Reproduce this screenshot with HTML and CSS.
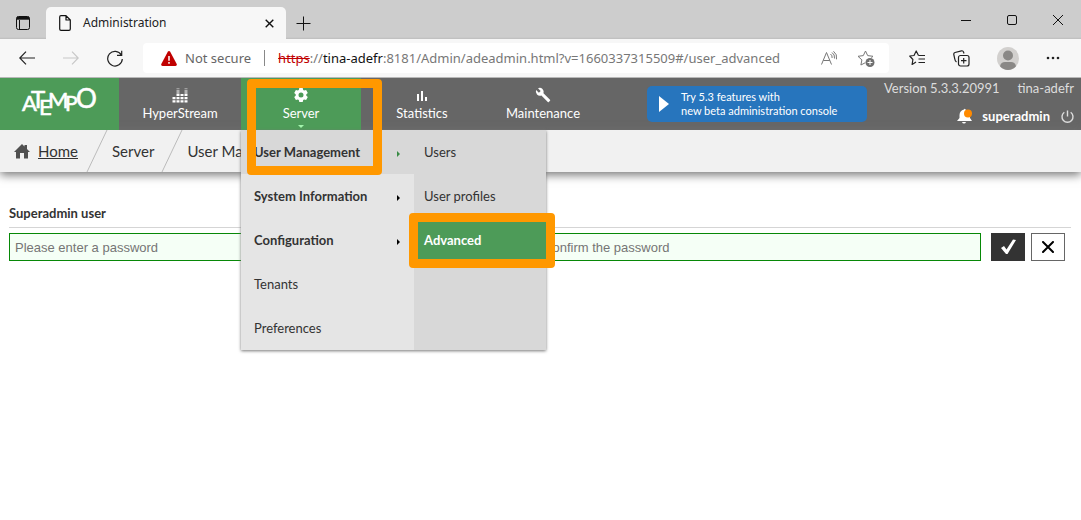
FILE: index.html
```html
<!DOCTYPE html>
<html lang="en">
<head>
<meta charset="utf-8">
<title>Administration</title>
<link rel="stylesheet" href="styles.css">
</head>
<body>
<div class="browser">
  <div class="tab-strip">
    <button class="icon-button workspace" aria-label="Tab actions">
      <svg width="16" height="16" viewBox="0 0 16 16" fill="none" stroke="#111"><rect x="1.5" y="1.5" width="13" height="13" rx="2"/><path d="M1.500 3.500h13M4.500 5v9.500" /><path d="M2 3.200h12" stroke-width="3"/></svg>
    </button>
    <div class="tab">
      <svg width="14" height="16" viewBox="0 0 14 16" fill="none" stroke="#111" stroke-width="1.200"><path d="M3 .7h5l4.300 4.300v9q0 1.300-1.300 1.300H3q-1.300 0-1.300-1.300V2Q1.700.7 3 .7zM8 .7v4.300h4.300" stroke-linejoin="round"/></svg>
      <span class="tab-title">Administration</span>
      <button class="icon-button" aria-label="Close tab"><svg width="9" height="9" viewBox="0 0 9 9" stroke="#111" stroke-width="1.400"><path d="M.7.7l7.600 7.600M8.300.7L.7 8.300"/></svg></button>
    </div>
    <button class="icon-button new-tab" aria-label="New tab"><svg width="15" height="15" viewBox="0 0 15 15" stroke="#111"><path d="M.5 7.500h14M7.500.5v14"/></svg></button>
    <div class="window-controls">
      <button class="icon-button" aria-label="Minimize"><svg width="10" height="10" viewBox="0 0 10 10" stroke="#111"><path d="M0 5.500h10"/></svg></button>
      <button class="icon-button" aria-label="Maximize"><svg width="10" height="10" viewBox="0 0 10 10" fill="none" stroke="#111"><rect x=".5" y=".5" width="9" height="9" rx="1.500"/></svg></button>
      <button class="icon-button" aria-label="Close"><svg width="10" height="10" viewBox="0 0 10 10" stroke="#111"><path d="M0 0l10 10M10 0L0 10"/></svg></button>
    </div>
  </div>
  <div class="toolbar">
    <div class="nav-buttons">
      <button class="icon-button" aria-label="Back"><svg width="16" height="14" viewBox="0 0 16 14" fill="none" stroke="#222" stroke-width="1.200"><path d="M7 .7L.8 7 7 13.300M1 7h15"/></svg></button>
      <button class="icon-button" aria-label="Forward"><svg width="16" height="14" viewBox="0 0 16 14" fill="none" stroke="#c8c8c8" stroke-width="1.200"><path d="M9 .7L15.200 7 9 13.300M15 7H0"/></svg></button>
      <button class="icon-button" aria-label="Refresh"><svg width="16" height="17" viewBox="0 0 16 17" fill="none" stroke="#222" stroke-width="1.200"><path d="M14.300 5A7.300 7.300 0 1 0 15.300 9M14.700.7V5.300H10"/></svg></button>
    </div>
    <div class="address">
      <svg width="16" height="15" viewBox="0 0 16 15"><path d="M8 0q.8 0 1.200.7l6.500 12.200q.7 2-1.200 2.100h-13q-1.900-.1-1.200-2.100L6.800.7Q7.200 0 8 0z" fill="#c00000"/><path d="M8 5v4.700M8 11v1.800" stroke="#fff" stroke-width="1.500"/></svg>
      <span class="insecure">Not secure</span>
      <span class="url"><s>https</s>://<b>tina-adefr</b>:8181/Admin/adeadmin.html?v=1660337315509#/user_advanced</span>
      <button class="icon-button" aria-label="Read aloud"><svg width="17" height="14" viewBox="0 0 17 14" fill="none" stroke="#777"><path d="M.5 13.500L5.500 1.500l5 12M2.300 9.500h6.500M9.500 3q2 1.500 1.600 4M11 1.500q3 2 2.500 6M12.500.3q4 3 3 8"/></svg></button>
      <button class="icon-button" aria-label="Add to favorites"><svg width="18" height="17" viewBox="0 0 18 17"><path d="M8.500 1l2.200 4.600 5.300.7-3.900 3.600 1 5.100-4.600-2.400L3.900 15l1-5.100L1 6.300l5.300-.7z" fill="none" stroke="#777" stroke-linejoin="round"/><circle cx="13" cy="12.500" r="5" fill="#fff"/><circle cx="13" cy="12.500" r="4.500" fill="#707070"/><path d="M10.500 12.500h5M13 10v5" stroke="#fff"/></svg></button>
    </div>
    <div class="tools">
      <button class="icon-button" aria-label="Favorites"><svg width="17" height="16" viewBox="0 0 17 16" fill="none" stroke="#222" stroke-width="1.200" stroke-linejoin="round"><path d="M9.500 5.500L7.200 1 5 5.500.7 6l3.200 3.500-.8 5L7 12M9.500 5.500H16M9.500 9H16M9.500 12.500H16"/></svg></button>
      <button class="icon-button" aria-label="Collections"><svg width="17" height="17" viewBox="0 0 17 17" fill="none" stroke="#222" stroke-width="1.200"><rect x="5.500" y="5.500" width="10.500" height="10.500" rx="2"/><path d="M10.700 8v5.500M8 10.700h5.500M3.500 12Q2 11 1.800 9L.8 4.500Q.5 3 2 2.500L8.500.8Q10 .5 10.500 2l.5 1.500"/></svg></button>
      <button class="icon-button" aria-label="Profile"><svg width="22" height="23" viewBox="0 0 22 23"><ellipse cx="11" cy="11.500" rx="11" ry="11.500" fill="#d2d0ce"/><circle cx="11" cy="8.500" r="5" fill="#8a8886"/><path d="M3 19.200q1-4.200 5-4.200h6q4 0 5 4.200-3.500 3.800-8 3.800t-8-3.800z" fill="#8a8886"/></svg></button>
      <button class="icon-button" aria-label="More"><svg width="14" height="4" viewBox="0 0 14 4" fill="#222"><circle cx="2" cy="2" r="1.300"/><circle cx="7" cy="2" r="1.300"/><circle cx="12" cy="2" r="1.300"/></svg></button>
    </div>
  </div>
</div>

<header class="app-header">
  <a class="logo" href="#" aria-label="Atempo">
    <svg width="78" height="34" viewBox="0 0 78 34" fill="#fff" stroke="#fff" stroke-width=".6"><text x="1" y="24" font-size="22">A</text><text x="10" y="21" font-size="24">T</text><text x="18" y="28" font-size="22">E</text><text x="27" y="21" font-size="22">M</text><text x="44" y="24" font-size="21">P</text><text x="55" y="21" font-size="26">O</text></svg>
  </a>
  <nav class="main-nav">
    <a class="nav-item" href="#"><svg width="16" height="16" viewBox="0 0 16 16" fill="none" stroke="#fff" stroke-width="3" stroke-dasharray="2.300 1"><path d="M2 15.500V9M6 15.500V5M10 15.500V7M14 15.500V5"/><path d="M6 5V1M14 5V1" opacity=".5"/></svg><span>HyperStream</span></a>
    <div class="nav-group">
      <a class="nav-item active" href="#"><svg width="16" height="16" viewBox="0 0 16 16"><path fill="#fff" fill-rule="evenodd" d="M6.300 1h3.400l.5 2 .9.500 2-.6 1.700 3L13.300 7.300v1.400l1.500 1.400-1.700 3-2-.6-.9.500-.5 2H6.300l-.5-2-.9-.5-2 .6-1.700-3 1.500-1.400V7.300L1.200 5.900l1.700-3 2 .6.900-.5zM8 5.500a2.500 2.500 0 1 0 0 5 2.500 2.500 0 0 0 0-5z"/></svg><span>Server</span><i class="caret"></i></a>
      <div class="mega-menu">
        <ul class="menu-list">
          <li><a class="strong open" href="#">User Management<i class="arrow"></i></a></li>
          <li><a class="strong" href="#">System Information<i class="arrow"></i></a></li>
          <li><a class="strong" href="#">Configuration<i class="arrow"></i></a></li>
          <li><a href="#">Tenants</a></li>
          <li><a href="#">Preferences</a></li>
        </ul>
        <ul class="menu-list submenu">
          <li><a href="#">Users</a></li>
          <li><a href="#">User profiles</a></li>
          <li class="selected"><a href="#">Advanced</a><i class="highlight choice-highlight"></i></li>
        </ul>
      </div>
      <i class="highlight server-highlight"></i>
    </div>
    <a class="nav-item" href="#"><svg width="16" height="16" viewBox="0 0 16 16" stroke="#fff" stroke-width="2"><path d="M4 14V7M8 14V4M12 14v-4"/></svg><span>Statistics</span></a>
    <a class="nav-item" href="#"><svg width="16" height="16" viewBox="0 0 16 16" fill="#fff"><path d="M15 12.700L8.500 6.300q.8-2.500-1-4.400Q5.500.200 3 1.200L5.700 3.900 3.900 5.800 1.100 3.100q-1 2.600.9 4.500 1.900 1.800 4.400 1l6.400 6.400q.5.500 1 0l1.200-1.300q.5-.5 0-1z"/></svg><span>Maintenance</span></a>
  </nav>
  <a class="promo" href="#"><svg width="10" height="16" viewBox="0 0 10 16"><path d="M0 0l10 8-10 8z" fill="#fff"/></svg><span>Try 5.3 features with<br>new beta administration console</span></a>
  <div class="account">
    <div class="account-row meta"><span>Version 5.3.3.20991</span><span>tina-adefr</span></div>
    <div class="account-row user">
      <button class="icon-button" aria-label="Notifications"><svg width="16" height="16" viewBox="0 0 16 16"><path d="M0 13l2.500-3V7q.2-4.500 4.500-5.500Q7.500 0 8.500 1.500 13 3 13 7v3l2 3zM5 14h4q-.5 1.500-2 1.500T5 14z" fill="#fff"/><circle cx="11" cy="5.500" r="4" fill="#ff8a00"/></svg></button>
      <strong>superadmin</strong>
      <button class="icon-button" aria-label="Log out"><svg width="13" height="13" viewBox="0 0 13 13" fill="none" stroke="#ddd" stroke-width="1.400"><path d="M3.300 2.300a5.500 5.500 0 1 0 6.400 0M6.500.5v6"/></svg></button>
    </div>
  </div>
</header>

<nav class="breadcrumb" aria-label="Breadcrumb">
  <svg width="16" height="15" viewBox="0 0 16 15" fill="#505050"><path d="M8 0l2.500 2.500V1H13v4l3 3h-2v6.500H10V9H6v5.500H2V8H0z"/></svg>
  <a class="home" href="#">Home</a>
  <svg class="slash" viewBox="0 0 22 42" stroke="#bbb"><path d="M21 0L1 42"/></svg>
  <span>Server</span>
  <svg class="slash" viewBox="0 0 22 42" stroke="#bbb"><path d="M21 0L1 42"/></svg>
  <span>User Management</span>
</nav>

<main class="content">
  <h1>Superadmin user</h1>
  <form class="password-form">
    <input class="first" type="text" placeholder="Please enter a password" aria-label="Please enter a password">
    <input class="second" type="text" placeholder="Confirm the password" aria-label="Confirm the password">
    <button class="submit" type="button" aria-label="Save"><svg width="17" height="16" viewBox="0 0 17 16" fill="#fff"><path d="M1 9l3-2 2.500 3.500L13 .5l3 .5L7.500 15H6z"/></svg></button>
    <button class="cancel" type="button" aria-label="Cancel"><svg width="12" height="12" viewBox="0 0 12 12" stroke="#000" stroke-width="2" stroke-linecap="round"><path d="M1 1l10 10M11 1L1 11"/></svg></button>
  </form>
</main>
</body>
</html>
```
FILE: styles.css
```css
* { box-sizing: border-box; }
body { min-height: 100vh; margin: 0; background: #fff; color: #333; font: 13px/16px Lato, Calibri, sans-serif; }
a { color: inherit; text-decoration: none; }
svg { display: block; flex: none; }
.icon-button { display: flex; align-items: center; justify-content: center; padding: 0; border: 0; background: none; }

.browser { border-bottom: 1px solid #b8b8b8; font-family: "Noto Sans", "Segoe UI", sans-serif; }
.tab-strip { display: flex; align-items: flex-end; height: 39px; padding-left: 15px; background: linear-gradient(#cdcdcd 37px, #bdbdbd); }
.workspace { height: 32px; }
.tab { display: flex; align-items: center; gap: 11px; width: 240px; height: 32px; margin-left: 15px; padding: 0 12px; border-radius: 5px 5px 0 0; background: #f7f7f7; }
.tab-title { flex: 1; font-size: 12px; color: #222; }
.new-tab { height: 32px; margin-left: 10px; }
.window-controls { display: flex; gap: 36px; height: 39px; margin-left: auto; padding-right: 18px; }

.toolbar { display: flex; align-items: center; height: 38px; padding: 0 21px 0 19px; background: #f7f7f7; }
.nav-buttons { display: flex; gap: 28px; }
.address { display: flex; flex: 1; align-items: center; height: 30px; margin: 0 20px; padding: 0 14px 0 18px; border-radius: 4px; background: #fff; color: #777; font-size: 13px; }
.insecure { margin-left: 8px; padding-right: 13px; border-right: 1px solid #888; color: #666; }
.url { flex: 1; margin-left: 13px; white-space: nowrap; }
.url s { color: #c00000; }
.url b { color: #111; font-weight: 400; }
.address .icon-button + .icon-button { margin-left: 19px; }
.tools { display: flex; align-items: center; gap: 27px; }

.app-header { display: flex; height: 52px; background: #666; color: #fff; }
.logo { display: flex; align-items: center; justify-content: center; width: 119px; background: #4d9b58; font-family: Lato, sans-serif; }
.logo svg { overflow: visible; }
.main-nav { display: flex; gap: 1px; padding-left: 1px; }
.nav-group { position: relative; }
.nav-item { display: flex; flex-direction: column; align-items: center; gap: 2px; width: 120px; height: 52px; padding-top: 9px; font-size: 13px; }
.active { background: #4d9b58; }
.caret { margin-top: 2px; border: 3px solid transparent; border-top-color: #a4f5ad; }

.mega-menu { position: absolute; top: 52px; left: 0; z-index: 2; display: grid; grid-template-columns: 173px 132px; background: #e5e5e5; color: #333; box-shadow: 0 1px 3px #777; }
.menu-list { margin: 0; padding: 0; list-style: none; }
.menu-list a { display: flex; align-items: center; justify-content: space-between; height: 44px; padding: 0 14px 0 13px; }
.menu-list .strong { font-weight: 700; }
.menu-list .open { background: #d8d8d8; }
.arrow { width: 3px; height: 6px; margin-top: 4px; background: #000; clip-path: polygon(0 0, 100% 50%, 0 100%); }
.open .arrow { background: #398b45; }
.submenu { background: #d8d8d8; }
.submenu a { padding-left: 10px; }
.selected { position: relative; background: #4d9b58; color: #fff; font-weight: 700; }
.highlight { position: absolute; border: 9px solid #ff9800; border-radius: 4px; pointer-events: none; }
.choice-highlight { inset: -5px -9px -6px -5px; }
.server-highlight { z-index: 3; top: 1px; left: 6px; width: 135px; height: 96px; }

.promo { display: flex; align-items: center; gap: 12px; width: 220px; height: 36px; margin: 8px 0 0 44px; padding-left: 12px; border-radius: 5px; background: #2775bd; font-size: 11px; line-height: 14px; white-space: nowrap; }
.account { margin-left: auto; padding: 2px 7px 0 0; white-space: nowrap; }
.account-row { display: flex; align-items: center; justify-content: flex-end; }
.meta { gap: 18px; color: #ddd; }
.user { gap: 9px; margin-top: 12px; }
.user .icon-button:last-child { margin-left: 2px; }

.breadcrumb { display: flex; align-items: center; height: 42px; padding-left: 14px; background: #f1f1f1; box-shadow: 0 3px 9px #777; font-size: 15px; white-space: nowrap; }
.home { margin: 0 8px; text-decoration: underline; }
.slash { width: 22px; height: 42px; margin-right: 4px; }
.breadcrumb span { margin-right: 7px; }
.content { padding: 33px 10px 0 9px; }
.content h1 { margin: 0; padding-bottom: 6px; border-bottom: 1px solid #d5d5d5; font-size: 13px; line-height: 16px; }
.password-form { display: flex; gap: 10px; padding: 5px 6px 0 0; }
.password-form input { min-width: 0; height: 28px; padding: 0 5px; border: 1px solid #078807; border-radius: 0; background: #f5fff6; font: 13px "Liberation Sans", Arial, sans-serif; }
.password-form input::placeholder { color: #757575; }
.first { flex: 519; }
.second { flex: 443; }
.password-form button { display: flex; align-items: center; justify-content: center; width: 34px; height: 28px; padding: 0; }
.submit { border: 0; background: #333; }
.cancel { margin-left: -4px; border: 1px solid #666; background: #fff; }
```
